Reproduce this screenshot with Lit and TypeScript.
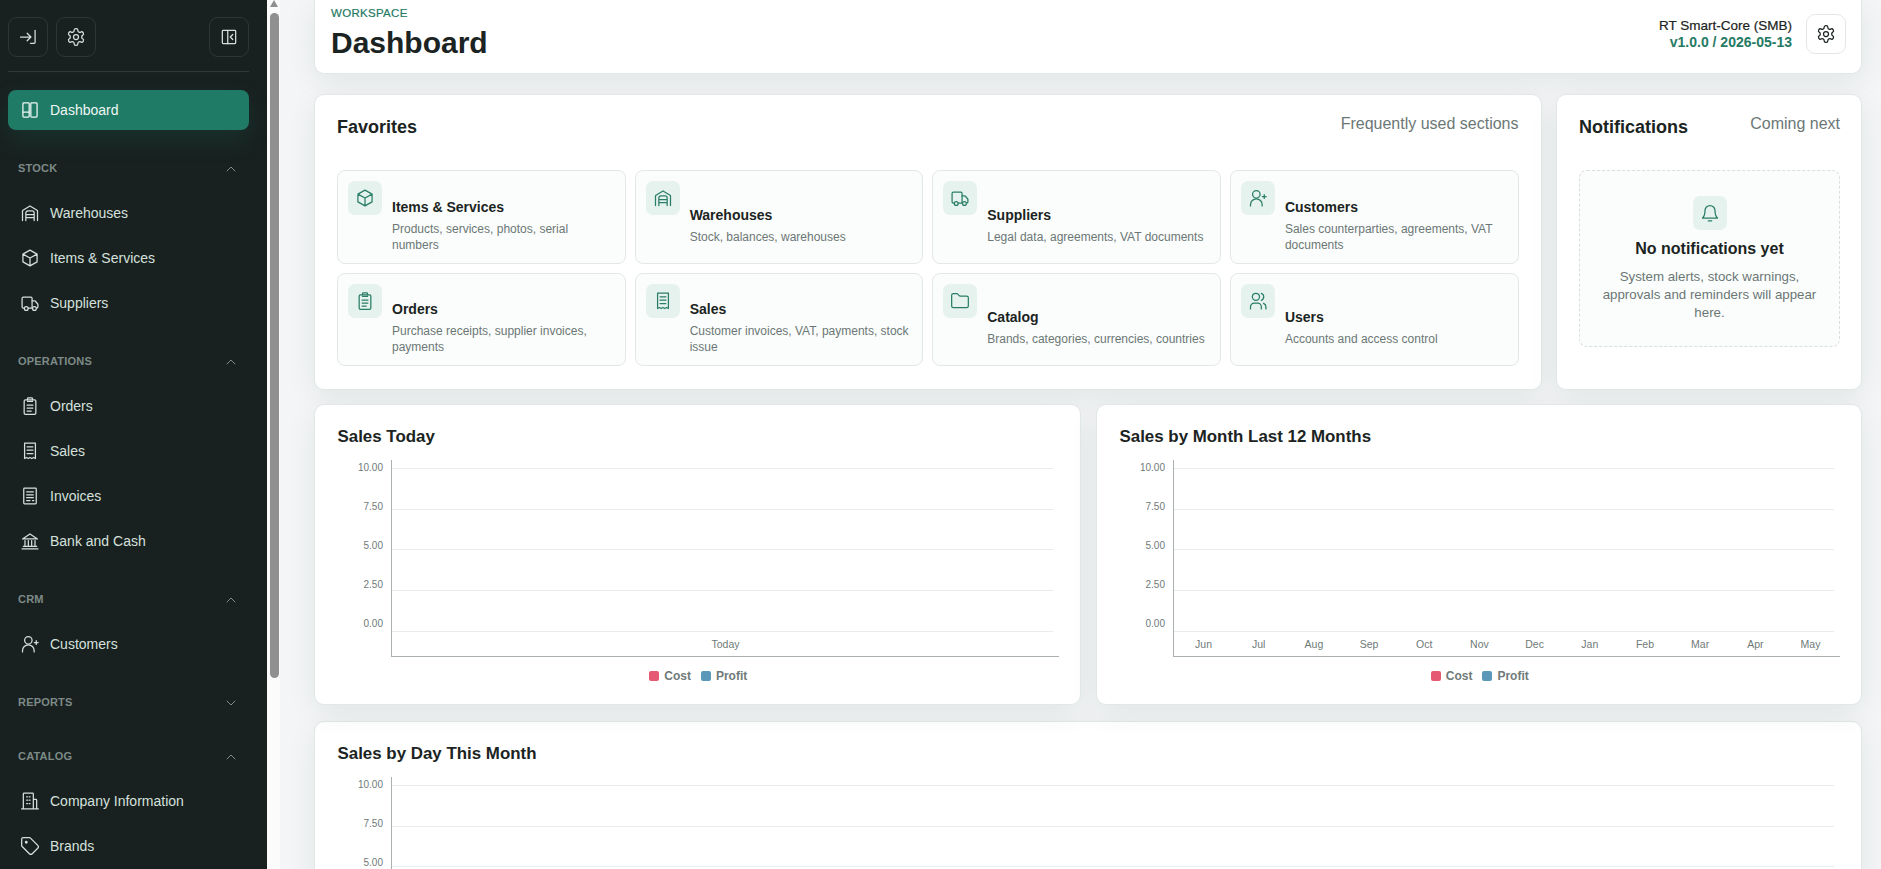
import { LitElement, css, html, svg } from 'lit';
import { customElement } from 'lit/decorators.js';

const GEAR =
  'M12.22 2h-.44a2 2 0 0 0-2 2v.18a2 2 0 0 1-1 1.73l-.43.25a2 2 0 0 1-2 0l-.15-.08a2 2 0 0 0-2.73.73l-.22.38a2 2 0 0 0 .73 2.73l.15.1a2 2 0 0 1 1 1.72v.51a2 2 0 0 1-1 1.74l-.15.09a2 2 0 0 0-.73 2.73l.22.38a2 2 0 0 0 2.73.73l.15-.08a2 2 0 0 1 2 0l.43.25a2 2 0 0 1 1 1.73V20a2 2 0 0 0 2 2h.44a2 2 0 0 0 2-2v-.18a2 2 0 0 1 1-1.73l.43-.25a2 2 0 0 1 2 0l.15.08a2 2 0 0 0 2.73-.73l.22-.39a2 2 0 0 0-.73-2.73l-.15-.08a2 2 0 0 1-1-1.74v-.5a2 2 0 0 1 1-1.74l.15-.09a2 2 0 0 0 .73-2.73l-.22-.38a2 2 0 0 0-2.73-.73l-.15.08a2 2 0 0 1-2 0l-.43-.25a2 2 0 0 1-1-1.73V4a2 2 0 0 0-2-2z';

const ICONS: Record<string, unknown> = {
  login: svg`<path d="M3 12h12.5M11 7.5l4.5 4.5-4.5 4.5M20.5 4v14.5a1 1 0 0 1-1 1H15"/>`,
  gear: svg`<path d=${GEAR}/><circle cx="12" cy="12" r="3"/>`,
  panel: svg`<rect x="4" y="4" width="16" height="16" rx="1"/><path d="M10.5 4v16M16.5 9l-3 3 3 3"/>`,
  dashboard: svg`<rect x="3.5" y="3.5" width="7.5" height="17" rx="1"/><rect x="13" y="3.5" width="7.5" height="17" rx="1"/><path d="M3.5 14.5H11"/>`,
  warehouse: svg`<path d="M3 21V9.5a1 1 0 0 1 .5-.9L12 3.5l8.5 5.1a1 1 0 0 1 .5.9V21"/><path d="M7 21V12a2.5 2.5 0 0 1 2.5-2.5h5A2.5 2.5 0 0 1 17 12v9M7 14h10M7 17.5h10"/>`,
  box: svg`<path d="M12 2.5l8.5 4.8v9.4L12 21.5l-8.5-4.8V7.3zM3.5 7.3 12 12l8.5-4.7M12 12v9.5"/>`,
  truck: svg`<path d="M5 18H4a1.5 1.5 0 0 1-1.5-1.5v-10A1.5 1.5 0 0 1 4 5h9a1.5 1.5 0 0 1 1.5 1.5V18H10"/><path d="M14.5 9.5h3.2a1 1 0 0 1 .8.4l3 3.6v3a1.5 1.5 0 0 1-1.5 1.5H20M14.5 18"/><circle cx="7.5" cy="18.5" r="2.3"/><circle cx="17.3" cy="18.5" r="2.3"/>`,
  customer: svg`<circle cx="10" cy="7.5" r="4.5"/><path d="M3 21.5V20a7 7 0 0 1 14 0v1.5M19.5 8v4.5M17.2 10.2h4.6"/>`,
  orders: svg`<rect x="5" y="4.5" width="14" height="17.5" rx="1.5"/><path d="M9 4.5V3.2a1 1 0 0 1 1-1h4a1 1 0 0 1 1 1v1.3M9 6.5h6M8.5 11h7M8.5 14.5h7M8.5 18h5"/>`,
  receipt: svg`<path d="M5.5 2.5h13v18.5l-2.2-1.2-2.1 1.2-2.2-1.2-2.2 1.2-2.1-1.2-2.2 1.2zM8.5 7h7M8.5 11h7M8.5 15h7"/>`,
  invoice: svg`<rect x="4.5" y="2.5" width="15" height="19" rx="1"/><path d="M8 7h8M8 10.5h8M8 14h8M8 17.5h4M15 17.5h1.5"/>`,
  bank: svg`<path d="M3 9.5 12 3.5l9 6zM2.5 21.5h19M4 18.5h16M6 11.5v7M10 11.5v7M14 11.5v7M18 11.5v7"/>`,
  building: svg`<path d="M2 21.5h20M4 21.5V3.5a1 1 0 0 1 1-1h10a1 1 0 0 1 1 1v18M16 10h3a1 1 0 0 1 1 1v10.5M8 7h1M11 7h1M8 11h1M11 11h1M8 15h1M11 15h1"/>`,
  tag: svg`<path d="M12.586 2.586A2 2 0 0 0 11.172 2H4a2 2 0 0 0-2 2v7.172a2 2 0 0 0 .586 1.414l8.704 8.704a2.426 2.426 0 0 0 3.42 0l6.58-6.58a2.426 2.426 0 0 0 0-3.42z"/><circle cx="7.5" cy="7.5" r="1" fill="currentColor"/>`,
  folder: svg`<path d="M20 20a2 2 0 0 0 2-2V8a2 2 0 0 0-2-2h-7.9a2 2 0 0 1-1.69-.9L9.6 3.9A2 2 0 0 0 7.93 3H4a2 2 0 0 0-2 2v13a2 2 0 0 0 2 2Z"/>`,
  users: svg`<circle cx="9.5" cy="7" r="4.3"/><path d="M3 21.5V19a4.5 4.5 0 0 1 4.5-4.5h4A4.5 4.5 0 0 1 16 19v2.5M16 2.8a4.5 4.5 0 0 1 0 8.4M21.5 21.5V19a4.5 4.5 0 0 0-2.8-4.2"/>`,
  bell: svg`<path d="M6 9a6 6 0 0 1 12 0c0 6 1.2 7.5 3 9H3c1.8-1.5 3-3 3-9zM10 21.5h4"/>`,
  up: svg`<path d="M6 15l6-6 6 6"/>`,
  down: svg`<path d="M6 9l6 6 6-6"/>`,
};

const icon = (name: string) =>
  html`<svg class="ico" viewBox="0 0 24 24" fill="none" stroke="currentColor" stroke-linecap="round" stroke-linejoin="round">${ICONS[name]}</svg>`;

const NAV = [
  { title: 'STOCK', open: true, items: [['warehouse', 'Warehouses'], ['box', 'Items & Services'], ['truck', 'Suppliers']] },
  { title: 'OPERATIONS', open: true, items: [['orders', 'Orders'], ['receipt', 'Sales'], ['invoice', 'Invoices'], ['bank', 'Bank and Cash']] },
  { title: 'CRM', open: true, items: [['customer', 'Customers']] },
  { title: 'REPORTS', open: false, items: [] },
  { title: 'CATALOG', open: true, items: [['building', 'Company Information'], ['tag', 'Brands']] },
];

const FAVORITES = [
  ['box', 'Items & Services', 'Products, services, photos, serial numbers'],
  ['warehouse', 'Warehouses', 'Stock, balances, warehouses'],
  ['truck', 'Suppliers', 'Legal data, agreements, VAT documents'],
  ['customer', 'Customers', 'Sales counterparties, agreements, VAT documents'],
  ['orders', 'Orders', 'Purchase receipts, supplier invoices, payments'],
  ['receipt', 'Sales', 'Customer invoices, VAT, payments, stock issue'],
  ['folder', 'Catalog', 'Brands, categories, currencies, countries'],
  ['users', 'Users', 'Accounts and access control'],
];

const Y_LABELS = ['10.00', '7.50', '5.00', '2.50', '0.00'];
const MONTHS = ['Jun', 'Jul', 'Aug', 'Sep', 'Oct', 'Nov', 'Dec', 'Jan', 'Feb', 'Mar', 'Apr', 'May'];

@customElement('app-root')
export class AppRoot extends LitElement {
  static styles = css`
    :host {
      display: block;
      height: 100vh;
      overflow: hidden;
      font-family: 'Liberation Sans', Arial, sans-serif;
      color: #1b2422;
    }
    * {
      box-sizing: border-box;
    }
    .shell {
      display: flex;
      height: 100vh;
    }
    .ico {
      display: block;
      width: 20px;
      height: 20px;
      stroke-width: 1.5;
      flex: none;
    }

    /* sidebar */
    .sidebar {
      width: 267px;
      flex: none;
      background: #182120;
      padding: 17px 18px 0 8px;
      overflow: hidden;
      color: #d5e0dd;
    }
    .side-top {
      display: flex;
      gap: 8px;
      padding-bottom: 14px;
      border-bottom: 1px solid #2f3a38;
      margin-bottom: 18px;
    }
    .side-btn {
      width: 40px;
      height: 40px;
      display: flex;
      align-items: center;
      justify-content: center;
      border: 1px solid #2c3735;
      border-radius: 9px;
      color: #d5e0dd;
    }
    .side-btn.push {
      margin-left: auto;
    }
    .item {
      height: 41px;
      display: flex;
      align-items: center;
      gap: 10px;
      padding-left: 14px;
      font-size: 14px;
      border-radius: 8px;
    }
    .item .ico {
      margin-left: -2px;
    }
    .item.active {
      height: 40px;
      background: #207b66;
      color: #eef7f4;
      box-shadow: 0 10px 24px rgba(32, 123, 102, 0.18);
    }
    .section {
      margin-top: 25.5px;
    }
    .section.closed {
      margin-bottom: 30px;
    }
    .section.closed + .section {
      margin-top: 0;
    }
    .section-head {
      height: 24px;
      display: flex;
      align-items: center;
      justify-content: space-between;
      padding: 0 10px 0 10px;
      font-size: 11px;
      font-weight: 700;
      letter-spacing: 0.2px;
      color: #7d8a87;
    }
    .section-head .ico {
      width: 16px;
      height: 16px;
      margin-top: 2px;
    }
    .items {
      display: flex;
      flex-direction: column;
      gap: 4px;
      margin-top: 12.5px;
    }

    /* sidebar scrollbar */
    .scrollbar {
      width: 13px;
      flex: none;
      background: #fbfbfb;
      padding-left: 3px;
    }
    .arrow {
      width: 0;
      height: 0;
      border-left: 4.5px solid transparent;
      border-right: 4.5px solid transparent;
      border-bottom: 7px solid #8f8f8f;
    }
    .thumb {
      width: 9px;
      height: 665px;
      margin-top: 6px;
      background: #909090;
      border-radius: 5px;
    }

    /* main */
    main {
      flex: 1;
      min-width: 0;
      height: 869px;
      overflow: hidden;
      background: #f3f5f6;
      padding: 0 19px 0 34px;
    }
    .card {
      background: #fff;
      border: 1px solid #e2e7e7;
      border-radius: 10px;
      box-shadow: 0 8px 30px rgba(20, 40, 40, 0.07);
    }
    .topbar {
      height: 74px;
      border-top: 0;
      border-radius: 0 0 10px 10px;
      display: flex;
      justify-content: space-between;
      padding: 6px 15px 0 16px;
      margin-bottom: 20px;
    }
    .eyebrow {
      font-size: 11.5px;
      line-height: 15px;
      letter-spacing: 0.3px;
      color: #257a64;
      -webkit-text-stroke: 0.2px currentColor;
    }
    h1 {
      margin: 4px 0 0;
      font-size: 30px;
      line-height: 36px;
      font-weight: 700;
    }
    .top-right {
      display: flex;
      gap: 14px;
      padding-top: 8px;
    }
    .version {
      padding-top: 4px;
      text-align: right;
      font-size: 13.5px;
      line-height: 16px;
      -webkit-text-stroke: 0.2px currentColor;
    }
    .version b {
      display: block;
      font-size: 14px;
      color: #257a64;
      -webkit-text-stroke: 0;
    }
    .gear-btn {
      width: 40px;
      height: 40px;
      display: flex;
      align-items: center;
      justify-content: center;
      border: 1px solid #e3e8e7;
      border-radius: 9px;
    }
    .row-top {
      display: grid;
      grid-template-columns: 1227.5px 306px;
      gap: 14.5px;
      margin-bottom: 14px;
    }
    .panel {
      padding: 21px 21px 21px 22px;
      height: 296px;
    }
    .panel.favorites {
      padding-right: 22px;
    }
    .panel-head {
      display: flex;
      justify-content: space-between;
      align-items: flex-start;
      margin-bottom: 32px;
    }
    h2 {
      margin: 0;
      font-size: 18px;
      line-height: 22px;
      font-weight: 700;
    }
    .panel-sub {
      font-size: 16px;
      line-height: 16px;
      color: #6b7775;
    }
    .fav-grid {
      display: grid;
      grid-template-columns: repeat(4, 1fr);
      grid-template-rows: 94px 93px;
      gap: 9px;
    }
    .fav {
      display: grid;
      grid-template-columns: 34px 1fr;
      gap: 10px;
      padding: 10px;
      background: #fbfdfc;
      border: 1px solid #e3e8e7;
      border-radius: 8px;
    }
    .tile {
      width: 34px;
      height: 34px;
      display: flex;
      align-items: center;
      justify-content: center;
      background: #e6f2ee;
      border-radius: 7px;
      color: #2a7d66;
    }
    .fav-text {
      align-self: center;
      margin-top: 16px;
    }
    .fav-title {
      font-size: 14px;
      line-height: 18px;
      font-weight: 700;
      margin-bottom: 5px;
    }
    .fav-desc {
      font-size: 12px;
      line-height: 16px;
      color: #6b7775;
    }
    .empty {
      height: 177px;
      border: 1px dashed #d9dfde;
      border-radius: 8px;
      background: #fbfdfc;
      padding: 25px 12px 0;
      display: flex;
      flex-direction: column;
      align-items: center;
      text-align: center;
    }
    .empty-title {
      margin-top: 9px;
      font-size: 16px;
      line-height: 20px;
      font-weight: 700;
    }
    .empty-desc {
      margin-top: 9px;
      font-size: 13.3px;
      line-height: 18px;
      color: #6b7775;
    }
    .row-charts {
      display: grid;
      grid-template-columns: 767px 766px;
      gap: 15px;
      margin-bottom: 16px;
    }

    /* charts */
    .chart-card {
      height: 301px;
      padding: 21px 21px 0 22.5px;
    }
    .chart-card.wide {
      height: 320px;
    }
    .chart-title {
      font-size: 16.9px;
      line-height: 22px;
      font-weight: 700;
      margin: 0 0 12px;
    }
    .chart {
      display: flex;
    }
    .y-axis {
      width: 53.5px;
      flex: none;
      margin-top: -12px;
      padding-right: 8px;
      text-align: right;
      font-size: 10px;
      line-height: 39px;
      color: #6f7a78;
    }
    .plot {
      flex: 1;
      min-width: 0;
      height: 197px;
      padding-top: 8px;
      border-left: 1px solid #a9b0af;
      border-bottom: 1px solid #a9b0af;
    }
    .line {
      height: 40.7px;
      margin-right: 6px;
      border-top: 1px solid #e8ecec;
    }
    .line:nth-child(5) {
      height: auto;
    }
    .x-axis {
      display: flex;
      padding-left: 2px;
      margin-right: 2px;
      font-size: 10.5px;
      line-height: 25px;
      color: #6f7a78;
    }
    .x-axis span {
      flex: 1;
      text-align: center;
    }
    .legend {
      display: flex;
      justify-content: center;
      align-items: center;
      margin-top: 11px;
      font-size: 12px;
      line-height: 16px;
      font-weight: 700;
      color: #6f7a78;
    }
    .swatch {
      width: 10px;
      height: 10px;
      border-radius: 2px;
      margin-right: 5px;
    }
    .swatch.cost {
      background: #e55a72;
    }
    .swatch.profit {
      background: #5b97b8;
      margin-left: 10px;
    }
  `;

  private chart(title: string, labels: string[], wide = false) {
    // the wide chart runs past the bottom of the window, only its top three rows show
    const rows = wide ? Y_LABELS.slice(0, 3) : Y_LABELS;
    return html`
      <section class="card chart-card ${wide ? 'wide' : ''}">
        <h3 class="chart-title">${title}</h3>
        <div class="chart">
          <div class="y-axis">${rows.map((l) => html`<div>${l}</div>`)}</div>
          <div class="plot">
            ${rows.map(() => html`<div class="line"></div>`)}
            <div class="x-axis">${labels.map((l) => html`<span>${l}</span>`)}</div>
          </div>
        </div>
        ${wide
          ? ''
          : html`<div class="legend">
              <span class="swatch cost"></span>Cost<span class="swatch profit"></span>Profit
            </div>`}
      </section>
    `;
  }

  render() {
    return html`
      <div class="shell">
        <aside class="sidebar">
          <div class="side-top">
            <div class="side-btn">${icon('login')}</div>
            <div class="side-btn">${icon('gear')}</div>
            <div class="side-btn push">${icon('panel')}</div>
          </div>
          <div class="item active">${icon('dashboard')}Dashboard</div>
          ${NAV.map(
            (s) => html`
              <div class="section ${s.open ? '' : 'closed'}">
                <div class="section-head">${s.title}${icon(s.open ? 'up' : 'down')}</div>
                ${s.open
                  ? html`<div class="items">
                      ${s.items.map((i) => html`<div class="item">${icon(i[0])}${i[1]}</div>`)}
                    </div>`
                  : ''}
              </div>
            `
          )}
        </aside>
        <div class="scrollbar">
          <div class="arrow"></div>
          <div class="thumb"></div>
        </div>
        <main>
          <header class="card topbar">
            <div>
              <div class="eyebrow">WORKSPACE</div>
              <h1>Dashboard</h1>
            </div>
            <div class="top-right">
              <div class="version">RT Smart-Core (SMB)<b>v1.0.0 / 2026-05-13</b></div>
              <div class="gear-btn">${icon('gear')}</div>
            </div>
          </header>
          <div class="row-top">
            <section class="card panel favorites">
              <div class="panel-head">
                <h2>Favorites</h2>
                <div class="panel-sub">Frequently used sections</div>
              </div>
              <div class="fav-grid">
                ${FAVORITES.map(
                  (f) => html`
                    <div class="fav">
                      <div class="tile">${icon(f[0])}</div>
                      <div class="fav-text">
                        <div class="fav-title">${f[1]}</div>
                        <div class="fav-desc">${f[2]}</div>
                      </div>
                    </div>
                  `
                )}
              </div>
            </section>
            <section class="card panel">
              <div class="panel-head">
                <h2>Notifications</h2>
                <div class="panel-sub">Coming next</div>
              </div>
              <div class="empty">
                <div class="tile">${icon('bell')}</div>
                <div class="empty-title">No notifications yet</div>
                <div class="empty-desc">System alerts, stock warnings, approvals and reminders will appear here.</div>
              </div>
            </section>
          </div>
          <div class="row-charts">
            ${this.chart('Sales Today', ['Today'])}
            ${this.chart('Sales by Month Last 12 Months', MONTHS)}
          </div>
          ${this.chart('Sales by Day This Month', [], true)}
        </main>
      </div>
    `;
  }
}
